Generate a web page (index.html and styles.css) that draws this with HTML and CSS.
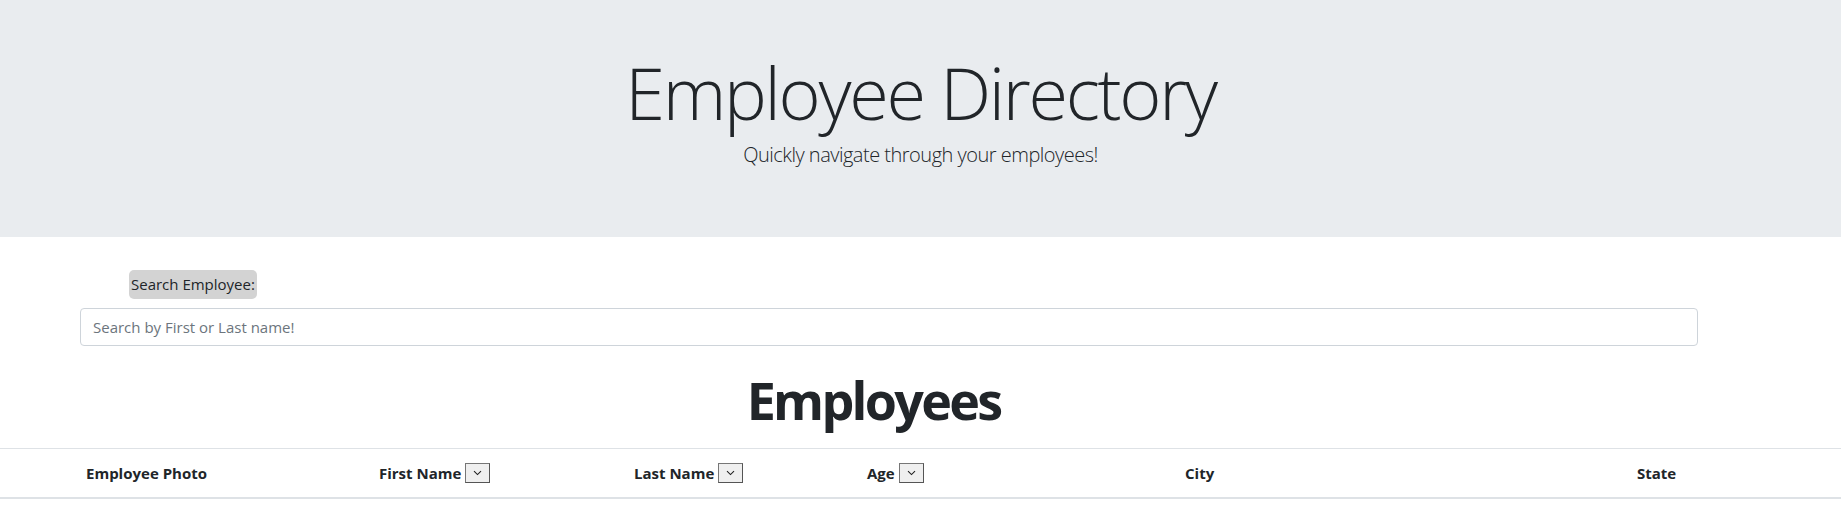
FILE: index.html
```html
<!DOCTYPE html>
<html lang="en">
<head>
<meta charset="utf-8">
<title>Employee Directory</title>
<link rel="stylesheet" href="styles.css">
</head>
<body>
<header class="jumbotron">
  <h1 class="title">Employee Directory</h1>
  <p class="lead">Quickly navigate through your employees!</p>
</header>
<section class="search">
  <label class="search-label" for="search">Search Employee:</label>
  <input class="search-input" id="search" type="text" placeholder="Search by First or Last name!">
</section>
<h2 class="section-title">Employees</h2>
<table class="emp-table">
  <colgroup>
    <col class="c1"><col class="c2"><col class="c3"><col class="c4"><col class="c5"><col class="c6">
  </colgroup>
  <thead>
    <tr>
      <th class="first"><div class="hcell">Employee Photo</div></th>
      <th><div class="hcell">First Name <span class="sort"><svg width="9" height="6" viewBox="0 0 9 6"><path d="M1 1.2 L4.5 4.6 L8 1.2" fill="none" stroke="#222" stroke-width="1.1"/></svg></span></div></th>
      <th><div class="hcell">Last Name <span class="sort"><svg width="9" height="6" viewBox="0 0 9 6"><path d="M1 1.2 L4.5 4.6 L8 1.2" fill="none" stroke="#222" stroke-width="1.1"/></svg></span></div></th>
      <th><div class="hcell">Age <span class="sort"><svg width="9" height="6" viewBox="0 0 9 6"><path d="M1 1.2 L4.5 4.6 L8 1.2" fill="none" stroke="#222" stroke-width="1.1"/></svg></span></div></th>
      <th><div class="hcell">City</div></th>
      <th><div class="hcell">State</div></th>
    </tr>
  </thead>
  <tbody></tbody>
</table>
</body>
</html>
```
FILE: styles.css
```css
* { box-sizing: border-box; }
html, body { margin: 0; padding: 0; }
body {
  font-family: "Open Sans", "Noto Sans", sans-serif;
  color: #212529;
  background: #fff;
  font-size: 16px;
  overflow: hidden;
}
.jumbotron {
  background: #e9ecef;
  height: 237px;
  padding-top: 49px;
  text-align: center;
}
.title {
  margin: 0;
  font-size: 72px;
  font-weight: 300;
  line-height: 86px;
  letter-spacing: -2.3px;
}
.lead {
  margin: 5px 0 0;
  font-size: 20px;
  font-weight: 300;
  line-height: 30px;
  letter-spacing: -0.5px;
}
.search {
  display: flex;
  flex-direction: column;
  align-items: flex-start;
  padding: 33px 0 0 80px;
}
.search-label {
  margin-left: 49px;
  background: #d3d3d3;
  border-radius: 5px;
  padding: 0 2px;
  height: 29px;
  line-height: 29px;
  font-size: 15px;
  width: 128px;
  white-space: nowrap;
}
.search-input {
  margin-top: 9px;
  width: 1618px;
  height: 38px;
  border: 1px solid #ced4da;
  border-radius: 4px;
  padding: 6px 12px;
  font-family: inherit;
  font-size: 15px;
  color: #495057;
  outline: none;
}
.search-input::placeholder { color: #6c757d; }
.section-title {
  margin: 23px 0 0;
  padding-right: 94px;
  text-align: center;
  font-size: 52px;
  font-weight: 700;
  line-height: 62px;
  letter-spacing: -2.7px;
}
.emp-table {
  margin-top: 17px;
  width: 100%;
  border-collapse: collapse;
  table-layout: fixed;
}
.c1 { width: 367px; }
.c2 { width: 255px; }
.c3 { width: 233px; }
.c4 { width: 318px; }
.c5 { width: 452px; }
.emp-table th {
  text-align: left;
  padding: 12px;
  font-size: 15px;
  font-weight: 700;
  line-height: 24px;
  border-top: 1px solid #dee2e6;
  border-bottom: 2px solid #dee2e6;
  white-space: nowrap;
}
.emp-table th.first { padding-left: 86px; }
.hcell {
  display: flex;
  align-items: center;
  gap: 4px;
  height: 24px;
}
.sort {
  display: inline-flex;
  align-items: center;
  justify-content: center;
  width: 25px;
  height: 20px;
  background: #efefef;
  border: 1px solid #767676;
  border-right-color: #555;
  border-bottom-color: #555;
}
```
